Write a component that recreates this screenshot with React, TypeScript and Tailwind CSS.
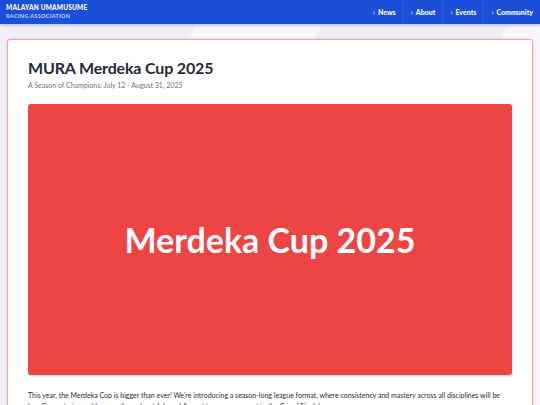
const navItems = ['News', 'About', 'Events', 'Community'];

export default function App() {
  return (
    <div className="min-h-[405px] w-[540px] overflow-hidden bg-[#f4f2f9] font-['Lato',sans-serif] relative">
      {/* faint background shapes */}
      <div className="absolute inset-0 bg-[linear-gradient(115deg,#f1eff8_0%,#f1eff8_28%,#f7f6fb_28%,#f7f6fb_45%,#f0eef7_45%,#f0eef7_70%,#f6f5fb_70%)]" />

      <header className="relative z-10 h-6 bg-[#1c4fd7] flex items-center justify-between pl-[6px] shadow-[0_1px_3px_rgba(30,64,175,0.35)]">
        <div className="flex flex-col leading-none">
          <span className="text-[6.5px] font-black tracking-[0.03em] text-white">MALAYAN UMAMUSUME</span>
          <span className="mt-[2px] text-[5.5px] font-bold tracking-[0.06em] text-blue-200">RACING ASSOCIATION</span>
        </div>
        <nav className="flex h-full">
          {navItems.map((item, i) => (
            <a
              key={item}
              className={`flex items-center gap-[3px] h-full px-[7px] text-[7px] font-black text-white ${
                i > 0 ? 'border-l border-[#2a5ce0]' : ''
              }`}
            >
              <span className="text-[7px] text-blue-200">›</span>
              {item}
            </a>
          ))}
        </nav>
      </header>

      <main className="relative z-10 px-[7px] pt-[15px]">
        <div className="bg-white border border-[#f0a3aa] rounded-[3px] shadow-[0_0_3px_rgba(239,68,68,0.25)] px-[20px] pt-[16px] pb-4">
          <h1 className="text-[16px] font-bold text-[#1f2937] leading-[23px] tracking-[-0.01em]">MURA Merdeka Cup 2025</h1>
          <p className="text-[7px] text-gray-500 leading-[10px] mt-[1px]">A Season of Champions: July 12 - August 31, 2025</p>

          <div className="mt-[14px] h-[271px] rounded-[3px] bg-[#ef4444] flex items-center justify-center shadow-[0_1px_2px_rgba(0,0,0,0.15)]">
            <span className="text-[34px] font-bold text-white leading-none">Merdeka Cup 2025</span>
          </div>

          <p className="mt-[15px] text-[7px] leading-[11px] text-[#1f2937]">
            This year, the Merdeka Cup is bigger than ever! We're introducing a season-long league format, where consistency and mastery across all disciplines will be key. Compete in weekly races throughout July and August to earn your spot in the Grand Finals!
          </p>
        </div>
      </main>
    </div>
  );
}
